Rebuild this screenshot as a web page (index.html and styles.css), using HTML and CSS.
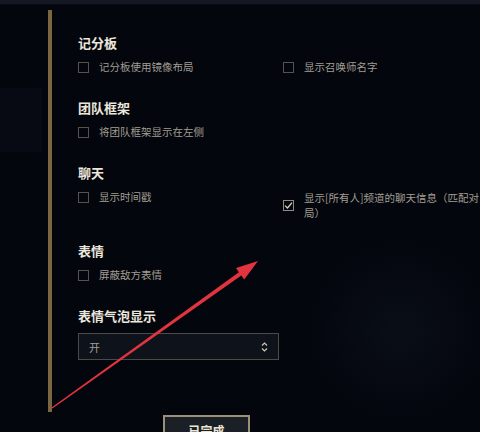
FILE: index.html
```html
<!DOCTYPE html>
<html lang="zh-CN">
<head>
    <meta charset="UTF-8">
    <meta name="viewport" content="width=device-width, initial-scale=1.0">
    <title>游戏设置 - 界面</title>
    <link rel="stylesheet" href="styles.css">
</head>
<body>

    <div class="top-bar"></div>
    <div class="side-shade"></div>

    <div class="panel">
        <!-- 记分板 -->
        <div class="section">
            <h3>记分板</h3>
            <div class="options">
                <label class="option"><span class="box"></span><span class="text">记分板使用镜像布局</span></label>
                <label class="option"><span class="box"></span><span class="text">显示召唤师名字</span></label>
            </div>
        </div>

        <!-- 团队框架 -->
        <div class="section">
            <h3>团队框架</h3>
            <div class="options">
                <label class="option"><span class="box"></span><span class="text">将团队框架显示在左侧</span></label>
            </div>
        </div>

        <!-- 聊天 -->
        <div class="section section-chat">
            <h3>聊天</h3>
            <div class="options">
                <label class="option"><span class="box"></span><span class="text">显示时间戳</span></label>
                <label class="option option-wide">
                    <span class="box checked">
                        <svg width="9" height="9" viewBox="0 0 9 9"><path d="M1 4.6 L3.5 7 L8 1.6" fill="none" stroke="#d6d2c6" stroke-width="1.3"/></svg>
                    </span>
                    <span class="text">显示[所有人]频道的聊天信息（匹配对局）</span>
                </label>
            </div>
        </div>

        <!-- 表情 -->
        <div class="section">
            <h3>表情</h3>
            <div class="options">
                <label class="option"><span class="box"></span><span class="text">屏蔽敌方表情</span></label>
            </div>
        </div>

        <!-- 表情气泡显示 -->
        <div class="section section-last">
            <h3>表情气泡显示</h3>
            <div class="select">
                <span class="select-value">开</span>
                <svg class="select-arrows" width="7" height="12" viewBox="0 0 7 12">
                    <path d="M1 4.5 L3.5 2 L6 4.5" fill="none" stroke="#cfc8b4" stroke-width="1.2"/>
                    <path d="M1 7.5 L3.5 10 L6 7.5" fill="none" stroke="#cfc8b4" stroke-width="1.2"/>
                </svg>
            </div>
        </div>
    </div>

    <button class="done-btn">已完成</button>

    <!-- Red annotation arrow drawn over the page -->
    <svg class="annotation" width="480" height="432" viewBox="0 0 480 432">
        <polygon points="51.6,407.4 238.9,272.2 236,268.1 258,261 244.2,279.5 241.3,275.4 52.4,408.6" fill="#e1343f"/>
    </svg>

</body>
</html>
```

FILE: styles.css
```css
html, body {
    height: 100%;
}

body {
    margin: 0;
    padding: 0;
    background: radial-gradient(circle at 400px 330px, #0a0e17 0, #03060d 90px) #03060d;
    font-family: "Noto Sans CJK SC", "Noto Sans", sans-serif;
    position: relative;
    overflow: hidden;
}

/* thin strip along the top edge */
.top-bar {
    height: 4px;
    background: #131822;
    border-bottom: 1px solid #080b12;
}

/* faint panel showing at the far left */
.side-shade {
    position: absolute;
    left: 0;
    top: 88px;
    width: 42px;
    height: 64px;
    background: #070a12;
}

/* Main settings panel with gold rule on the left */
.panel {
    margin: 5px 0 0 48px;
    border-left: 4px solid #7b6642;
    padding: 25px 0 52px 26px;
}

.section {
    margin-bottom: 26px;
}

.section-chat {
    margin-bottom: 23px;
}

.section-last {
    margin-bottom: 0;
}

h3 {
    margin: 0 0 9px;
    font-size: 13px;
    line-height: 16px;
    font-weight: bold;
    color: #ece7dd;
}

.options {
    display: grid;
    grid-template-columns: 205px 1fr;
    align-items: start;
}

.option {
    display: flex;
    align-items: center;
    gap: 10px;
}

.box {
    width: 9px;
    height: 9px;
    flex: none;
    border: 1px solid #55534f;
    display: flex;
    align-items: center;
    justify-content: center;
}

.box.checked {
    border-color: #8e8a80;
}

.text {
    font-size: 10.5px;
    line-height: 14px;
    color: #a29d92;
    white-space: nowrap;
}

.option-wide .text {
    white-space: normal;
    width: 178px;
    line-height: 15px;
}

/* Dropdown */
.select {
    height: 25px;
    width: 179px;
    border: 1px solid #4b4a47;
    background: #0e121a;
    display: flex;
    align-items: center;
    justify-content: space-between;
    padding: 0 10px;
}

.select-value {
    font-size: 11px;
    color: #a29d92;
}

/* Bottom button */
.done-btn {
    display: block;
    margin: 3px 0 0 163px;
    width: 87px;
    height: 30px;
    background: #1b2027;
    border: 2px solid #9c9178;
    color: #eee6d4;
    font-family: "Noto Sans CJK SC", sans-serif;
    font-size: 12px;
    font-weight: bold;
    padding: 0;
}

.annotation {
    position: absolute;
    left: 0;
    top: 0;
    pointer-events: none;
}
```
